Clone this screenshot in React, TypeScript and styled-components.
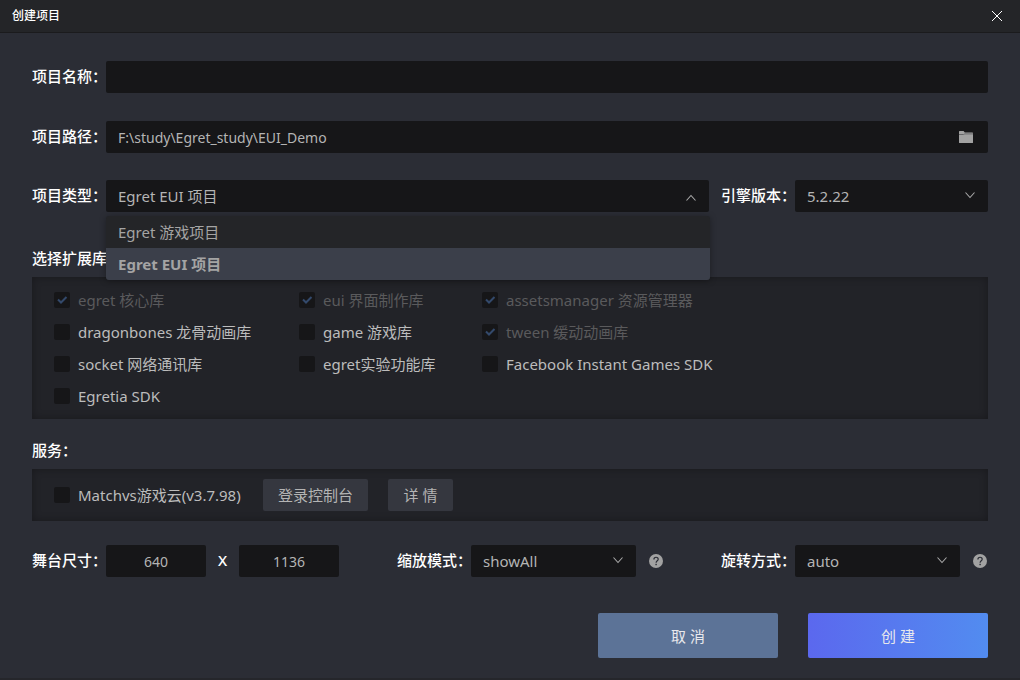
import React, { useState } from "react";
import styled, { createGlobalStyle } from "styled-components";

const GlobalStyle = createGlobalStyle`
  *, *::before, *::after { box-sizing: border-box; }
  html, body { margin: 0; }
  body {
    background: #2b2d35;
    color: #ffffff;
    font-family: "Noto Sans", "Noto Sans CJK SC", sans-serif;
    font-size: 15px;
    line-height: 20px;
  }
  button, input, select { font: inherit; margin: 0; }
`;

const Window = styled.div`
  display: flex;
  flex-direction: column;
  min-height: 100vh;
  border-bottom: 2px solid #25262b;
`;

const TitleBar = styled.header`
  display: flex;
  align-items: center;
  justify-content: space-between;
  height: 33px;
  padding: 0 12px;
  background: #242528;
  border-bottom: 1px solid #1b1b1d;
`;

const Title = styled.h1`
  margin: 0;
  font-size: 12px;
  font-weight: 500;
`;

const CloseButton = styled.button`
  display: flex;
  padding: 5px;
  border: 0;
  background: none;
  color: #ffffff;
`;

const Form = styled.form`
  padding: 28px 32px 19px;
`;

const Row = styled.div`
  display: flex;
  align-items: center;
  margin-bottom: 28px;
`;

const TypeRow = styled.div`
  display: grid;
  grid-template-columns: 677fr 267fr;
  column-gap: 12px;
  margin: -1px 0 36px;
`;

const StageRow = styled.div`
  display: grid;
  grid-template-columns: 307fr 266fr 266fr;
  column-gap: 58px;
  margin: 24px 0 36px;
  padding-right: 1px;
`;

const Group = styled.div`
  display: flex;
  align-items: center;
  min-width: 0;
`;

const Label = styled.label`
  flex: none;
  width: 74px;
  padding-bottom: 2px;
  font-weight: 500;
  white-space: nowrap;
`;

const SectionTitle = styled.h2`
  margin: 0 0 9px;
  font-size: 15px;
  font-weight: 500;
`;

const Field = styled.div`
  position: relative;
  flex: 1;
  min-width: 0;
`;

const TextInput = styled.input<{ $centered?: boolean }>`
  display: block;
  width: ${(p) => (p.$centered ? "100px" : "100%")};
  height: 32px;
  padding: 0 12px;
  border: 0;
  border-radius: 2px;
  outline: 0;
  background: #161618;
  color: #b4b4b4;
  font-size: 14px;
  text-align: ${(p) => (p.$centered ? "center" : "left")};
`;

const SelectInput = styled.select`
  display: block;
  width: 100%;
  height: 32px;
  padding: 0 32px 0 12px;
  border: 0;
  border-radius: 2px;
  outline: 0;
  appearance: none;
  background: #161618;
  color: #b4b4b4;
`;

const Chevron = styled.svg<{ $open?: boolean }>`
  position: absolute;
  top: 10px;
  right: 12px;
  pointer-events: none;
  transform: ${(p) => (p.$open ? "translateY(1px) rotate(180deg)" : "none")};
`;

const FolderButton = styled.button`
  position: absolute;
  top: 8px;
  right: 14px;
  display: flex;
  padding: 0;
  border: 0;
  background: none;
`;

const Menu = styled.ul`
  position: absolute;
  z-index: 2;
  top: 36px;
  left: 0;
  right: -1px;
  margin: 0;
  padding: 0;
  list-style: none;
  border-radius: 3px;
  overflow: hidden;
  background: #242528;
  box-shadow: 0 1px 6px rgba(0, 0, 0, 0.35);
`;

const Option = styled.li<{ $selected: boolean }>`
  padding: 6px 12px;
  background: ${(p) => (p.$selected ? "#3b3f4a" : "transparent")};
  color: #a4a4a4;
  font-weight: ${(p) => (p.$selected ? 700 : 400)};
`;

const Panel = styled.div`
  background: #222328;
  box-shadow: inset 0 0 8px rgba(0, 0, 0, 0.3);
`;

const LibraryGrid = styled(Panel)`
  display: grid;
  grid-template-columns: 245px 183px 1fr;
  padding: 7px 22px;
  margin-bottom: 21px;
`;

const CheckLabel = styled.label<{ $disabled?: boolean }>`
  display: flex;
  align-items: center;
  gap: 8px;
  height: 32px;
  white-space: nowrap;
  color: ${(p) => (p.$disabled ? "#5a5a5c" : "#bcbcbc")};
`;

const ServicePanel = styled(Panel)`
  display: flex;
  align-items: center;
  gap: 20px;
  padding: 10px 22px;

  ${CheckLabel} { min-width: 189px; }
`;

const CheckBox = styled.span`
  position: relative;
  flex: none;
  width: 16px;
  height: 16px;

  input {
    display: block;
    width: 16px;
    height: 16px;
    margin: 0;
    appearance: none;
    border-radius: 2px;
    background: #161618;
  }
  svg {
    position: absolute;
    inset: 0;
    visibility: hidden;
    pointer-events: none;
  }
  input:checked + svg { visibility: visible; }
`;

const SmallButton = styled.button`
  min-width: 65px;
  height: 32px;
  padding: 0 15px;
  border: 0;
  border-radius: 2px;
  background: #35373f;
  color: #b4b4b4;
`;

const Times = styled.span`
  width: 33px;
  padding-bottom: 2px;
  font-weight: 500;
  text-align: center;
`;

const HelpButton = styled.button`
  display: flex;
  flex: none;
  margin-left: 13px;
  padding: 0;
  border: 0;
  background: none;
`;

const Actions = styled.div`
  display: flex;
  justify-content: flex-end;
  gap: 30px;
`;

const ActionButton = styled.button<{ $primary?: boolean }>`
  width: 180px;
  height: 45px;
  border: 0;
  border-radius: 2px;
  background: ${(p) => (p.$primary ? "linear-gradient(to right, #5b68ee, #528cf0)" : "#5c7397")};
  color: #e8e8ec;
`;

const ChevronIcon = ({ open }: { open?: boolean }) => (
  <Chevron $open={open} width="12" height="12" viewBox="0 0 12 12" fill="none" stroke="#a8a8a8" strokeWidth="1.1" aria-hidden="true">
    <path d="M1.5 2.5 L6 7.5 L10.5 2.5" />
  </Chevron>
);

const Help = ({ label }: { label: string }) => (
  <HelpButton type="button" aria-label={label}>
    <svg width="14" height="14" viewBox="0 0 14 14">
      <circle cx="7" cy="7" r="7" fill="#a2a2a2" />
      <path d="M4.9 5.4 C4.9 2.6 9.2 2.6 9.2 5.2 C9.2 6.8 7.1 6.8 7.1 8.8" fill="none" stroke="#2b2d35" strokeWidth="1.2" />
      <rect x="6.4" y="9.8" width="1.4" height="1.4" fill="#2b2d35" />
    </svg>
  </HelpButton>
);

type CheckProps = { text: string; checked?: boolean; disabled?: boolean };

const Check = ({ text, checked = false, disabled = false }: CheckProps) => (
  <CheckLabel $disabled={disabled}>
    <CheckBox>
      <input type="checkbox" defaultChecked={checked} disabled={disabled} />
      <svg width="16" height="16" viewBox="0 0 16 16" fill="none" stroke="#33496b" strokeWidth="2" aria-hidden="true">
        <path d="M4 7.5 L7 10.5 L12.5 5" />
      </svg>
    </CheckBox>
    {text}
  </CheckLabel>
);

const libraries: CheckProps[] = [
  { text: "egret 核心库", checked: true, disabled: true },
  { text: "eui 界面制作库", checked: true, disabled: true },
  { text: "assetsmanager 资源管理器", checked: true, disabled: true },
  { text: "dragonbones 龙骨动画库" },
  { text: "game 游戏库" },
  { text: "tween 缓动动画库", checked: true, disabled: true },
  { text: "socket 网络通讯库" },
  { text: "egret实验功能库" },
  { text: "Facebook Instant Games SDK" },
  { text: "Egretia SDK" },
];

const projectTypes = ["Egret 游戏项目", "Egret EUI 项目"];

export default function App() {
  const [open, setOpen] = useState(true);
  const [type, setType] = useState(projectTypes[1]);

  const toggleMenu = (event: React.MouseEvent) => {
    event.preventDefault();
    setOpen(!open);
  };

  const choose = (value: string) => {
    setType(value);
    setOpen(false);
  };

  return (
    <Window>
      <GlobalStyle />
      <TitleBar>
        <Title>创建项目</Title>
        <CloseButton type="button" aria-label="关闭">
          <svg width="12" height="12" viewBox="0 0 12 12" stroke="currentColor" strokeWidth="1">
            <path d="M1 1 L11 11 M11 1 L1 11" />
          </svg>
        </CloseButton>
      </TitleBar>
      <Form onSubmit={(event) => event.preventDefault()}>
        <Row>
          <Label htmlFor="name">项目名称：</Label>
          <Field>
            <TextInput id="name" />
          </Field>
        </Row>
        <Row>
          <Label htmlFor="path">项目路径：</Label>
          <Field>
            <TextInput id="path" defaultValue="F:\study\Egret_study\EUI_Demo" />
            <FolderButton type="button" aria-label="选择文件夹">
              <svg width="16" height="16" viewBox="0 0 16 16">
                <path d="M1 2.6 Q1 2 1.6 2 H5.6 L6.8 3.4 H14.4 Q15 3.4 15 4 V13.4 Q15 14 14.4 14 H1.6 Q1 14 1 13.4 Z" fill="#a2a2a2" />
                <path d="M1 5.5 H5.6 L6.8 4.9 H15" fill="none" stroke="#606062" strokeWidth="0.9" />
              </svg>
            </FolderButton>
          </Field>
        </Row>
        <TypeRow>
          <Group>
            <Label htmlFor="type">项目类型：</Label>
            <Field>
              <SelectInput id="type" value={type} onMouseDown={toggleMenu} onChange={(event) => choose(event.target.value)}>
                {projectTypes.map((item) => (
                  <option key={item}>{item}</option>
                ))}
              </SelectInput>
              <ChevronIcon open={open} />
              {open && (
                <Menu role="listbox" aria-label="项目类型">
                  {projectTypes.map((item) => (
                    <Option key={item} role="option" aria-selected={item === type} $selected={item === type} onClick={() => choose(item)}>
                      {item}
                    </Option>
                  ))}
                </Menu>
              )}
            </Field>
          </Group>
          <Group>
            <Label htmlFor="engine">引擎版本：</Label>
            <Field>
              <SelectInput id="engine">
                <option>5.2.22</option>
              </SelectInput>
              <ChevronIcon />
            </Field>
          </Group>
        </TypeRow>
        <SectionTitle>选择扩展库：</SectionTitle>
        <LibraryGrid>
          {libraries.map((library) => (
            <Check key={library.text} {...library} />
          ))}
        </LibraryGrid>
        <SectionTitle>服务：</SectionTitle>
        <ServicePanel>
          <Check text="Matchvs游戏云(v3.7.98)" />
          <SmallButton type="button">登录控制台</SmallButton>
          <SmallButton type="button">详 情</SmallButton>
        </ServicePanel>
        <StageRow>
          <Group>
            <Label htmlFor="width">舞台尺寸：</Label>
            <TextInput id="width" $centered defaultValue="640" />
            <Times>X</Times>
            <TextInput aria-label="舞台高度" $centered defaultValue="1136" />
          </Group>
          <Group>
            <Label htmlFor="scale">缩放模式：</Label>
            <Field>
              <SelectInput id="scale">
                <option>showAll</option>
              </SelectInput>
              <ChevronIcon />
            </Field>
            <Help label="缩放模式说明" />
          </Group>
          <Group>
            <Label htmlFor="rotation">旋转方式：</Label>
            <Field>
              <SelectInput id="rotation">
                <option>auto</option>
              </SelectInput>
              <ChevronIcon />
            </Field>
            <Help label="旋转方式说明" />
          </Group>
        </StageRow>
        <Actions>
          <ActionButton type="button">取 消</ActionButton>
          <ActionButton type="submit" $primary>创 建</ActionButton>
        </Actions>
      </Form>
    </Window>
  );
}
